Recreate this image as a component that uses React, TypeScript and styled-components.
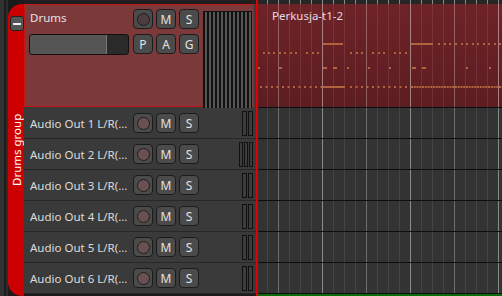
import React from 'react';
import styled, { createGlobalStyle } from 'styled-components';

const GlobalStyle = createGlobalStyle`
  html, body {
    margin: 0;
    padding: 0;
    background: #2a2a2a;
  }
  body {
    font-family: "Noto Sans", "DejaVu Sans", sans-serif;
  }
`;

const Window = styled.div`
  width: 502px;
  height: 296px;
  display: flex;
  overflow: hidden;
  background: #2a2a2a;
`;

const Gutter = styled.div`
  width: 8px;
  flex-shrink: 0;
  background: linear-gradient(90deg, #303030 0 4px, #1c1c1c 4px 6px, #2c2c2c 6px 8px);
`;

const GroupColumn = styled.div`
  width: 16px;
  flex-shrink: 0;
  display: flex;
  flex-direction: column;
  background: #1a1a1a;
  padding-top: 4px;
`;

const GroupBar = styled.div`
  flex: 1;
  background: #cc0000;
  border-radius: 14px 0 0 14px;
  display: flex;
  flex-direction: column;
  align-items: center;
  padding-top: 12px;
`;

const CollapseButton = styled.button`
  width: 14px;
  height: 15px;
  margin-left: 2px;
  padding: 0;
  border: 1px solid #222;
  border-radius: 3px;
  background: #555;
  display: flex;
  align-items: center;
  justify-content: center;
  &::before {
    content: '';
    width: 8px;
    height: 2px;
    background: #f0f0f0;
  }
`;

const GroupLabel = styled.div`
  flex: 1;
  display: flex;
  align-items: center;
  justify-content: center;
  writing-mode: vertical-rl;
  transform: rotate(180deg);
  color: #ffffff;
  font-size: 11.5px;
  margin-bottom: 28px;
`;

const HeaderColumn = styled.div`
  width: 232px;
  flex-shrink: 0;
  display: flex;
  flex-direction: column;
  background: #2a2a2a;
`;

const TopDark = styled.div`
  height: 4px;
  background: #1f1f1f;
  flex-shrink: 0;
`;

const GroupRow = styled.div`
  height: 104px;
  flex-shrink: 0;
  padding-right: 2px;
  padding-bottom: 1px;
  box-sizing: border-box;
  background: #3a3a3a;
`;

const GroupBox = styled.div`
  height: 100%;
  box-sizing: border-box;
  border: 1px solid #c41414;
  background: #7b393a;
  display: flex;
  padding: 4px 1px 0 4px;
  gap: 4px;
`;

const NameColumn = styled.div`
  width: 100px;
  display: flex;
  flex-direction: column;
  gap: 5px;
`;

const TrackName = styled.div`
  height: 20px;
  line-height: 18px;
  font-size: 11.5px;
  color: #e6e0ea;
  padding-left: 1px;
  white-space: nowrap;
  overflow: hidden;
`;

const Fader = styled.div<{ $level: number }>`
  height: 21px;
  box-sizing: border-box;
  border: 1px solid #111;
  border-radius: 3px;
  background: linear-gradient(
    90deg,
    #555 0 ${p => p.$level}%,
    #777 ${p => p.$level}% calc(${p => p.$level}% + 1px),
    #2a2a2a calc(${p => p.$level}% + 1px)
  );
`;

const ButtonGrid = styled.div`
  display: grid;
  grid-template-columns: repeat(3, 20px);
  grid-auto-rows: 20px;
  column-gap: 3px;
  row-gap: 5px;
  align-content: start;
`;

const ToolButton = styled.div`
  width: 20px;
  height: 20px;
  box-sizing: border-box;
  border: 1px solid #1c1c1c;
  border-radius: 4px;
  background: #4b4b4b;
  color: #e2e2e2;
  font-size: 12px;
  display: flex;
  align-items: center;
  justify-content: center;
`;

const RecDot = styled.span<{ $dim?: boolean }>`
  width: 13px;
  height: 13px;
  box-sizing: border-box;
  border-radius: 50%;
  border: 1px solid #1e1e1e;
  background: ${p => (p.$dim ? '#4e3d3e' : '#6b5052')};
`;

const GroupMeter = styled.div`
  width: 49px;
  height: 98px;
  margin-top: 2px;
  box-sizing: border-box;
  display: flex;
  gap: 2px;
  padding: 1px 1px 1px 2px;
  background: #111;
`;

const MeterBar = styled.div<{ $w: number; $fill: string }>`
  width: ${p => p.$w}px;
  height: 100%;
  background: ${p => p.$fill};
`;

const TrackRow = styled.div`
  height: 31px;
  flex-shrink: 0;
  box-sizing: border-box;
  border-bottom: 1px solid #282828;
  background: #3a3a3a;
  display: flex;
  align-items: center;
  padding: 0 3px 0 6px;
`;

const RowName = styled.div`
  width: 103px;
  font-size: 11.5px;
  color: #dcdcdc;
  white-space: nowrap;
  overflow: hidden;
`;

const RowButtons = styled.div`
  display: flex;
  gap: 3px;
`;

const RowMeter = styled.div`
  margin-left: auto;
  height: 25px;
  display: flex;
  gap: 1px;
`;

const RowMeterBar = styled.div<{ $w: number }>`
  width: ${p => p.$w}px;
  height: 100%;
  box-sizing: border-box;
  border: 1px solid #111;
  background: #3c3c3c;
`;

const BottomDark = styled.div`
  flex: 1;
  background: #1a1a1a;
`;

const Divider = styled.div`
  width: 2px;
  flex-shrink: 0;
  background: #e00000;
`;

const LaneColumn = styled.div`
  flex: 1;
  display: flex;
  flex-direction: column;
  background: #333;
`;

const Ruler = styled.div`
  height: 4px;
  flex-shrink: 0;
  background-color: #262626;
  background-image: repeating-linear-gradient(
    90deg,
    transparent 0 9px,
    #8a8a8a 9px 10px,
    transparent 10px 11px
  );
`;

const gridLines = `
  repeating-linear-gradient(90deg, transparent 0 64px, rgba(255,255,255,0.2) 64px 65px, transparent 65px 88px),
  repeating-linear-gradient(90deg, transparent 0 20px, rgba(255,255,255,0.22) 20px 21px, transparent 21px 44px),
  repeating-linear-gradient(90deg, transparent 0 9px, rgba(255,255,255,0.09) 9px 10px, transparent 10px 11px)
`;

const Lane = styled.div<{ $h: number; $clip?: boolean }>`
  height: ${p => p.$h}px;
  flex-shrink: 0;
  box-sizing: border-box;
  border-bottom: 1px solid #0e0e0e;
  display: flex;
  flex-direction: column;
  background-image: ${gridLines}${p =>
      p.$clip ? ', linear-gradient(180deg, #6e2327 0%, #5c1d21 100%)' : ''};
  background-color: #333;
`;

const ClipLabel = styled.div`
  height: 24px;
  box-sizing: border-box;
  padding: 4px 0 0 14px;
  line-height: 16px;
  font-size: 11.5px;
  color: #e0dbe6;
  white-space: nowrap;
`;

const Notes = styled.svg`
  display: block;
  width: 244px;
  height: 79px;
`;

const GreenStrip = styled.div`
  flex: 1;
  background: #0b6b0b;
`;

const NOTE = '#b0643e';
const X0 = 258;

type Seg = [number, number];

const rowA: Seg[] = [
  [323, 343],
  [411, 433],
  ...[438, 444, 449, 455, 461, 466, 472, 477, 483, 488, 494, 499].map(x => [x, x + 2] as Seg),
];

const rowB: Seg[] = [263, 268, 273, 279, 284, 290, 295, 306, 312, 317, 350, 356, 361, 372, 378, 383, 394, 399, 405].map(
  x => [x, x + 2] as Seg,
);

const rowC: Seg[] = [
  [258, 260],
  [279, 282],
  [323, 327],
  [333, 337],
  [347, 349],
  [368, 370],
  [389, 391],
  [412, 416],
  [422, 426],
  [466, 468],
  [489, 491],
];

const rowD: Seg[] = [];
for (let x = 260; x < 323; x += 5.5) rowD.push([x, x + 2]);
rowD.push([323, 345]);
for (let x = 350; x < 410; x += 5.5) rowD.push([x, x + 2]);
for (let x = 411; x < 502; x += 2.75) rowD.push([x, x + 2]);

const noteRows: { y: number; segs: Seg[] }[] = [
  { y: 15, segs: rowA },
  { y: 24, segs: rowB },
  { y: 39, segs: rowC },
  { y: 58, segs: rowD },
];

const tracks = [
  { name: 'Audio Out 1 L/R(...', bars: [5, 5] },
  { name: 'Audio Out 2 L/R(...', bars: [4, 4, 4] },
  { name: 'Audio Out 3 L/R(...', bars: [5, 5] },
  { name: 'Audio Out 4 L/R(...', bars: [5, 5] },
  { name: 'Audio Out 5 L/R(...', bars: [5, 5] },
  { name: 'Audio Out 6 L/R(...', bars: [5, 5] },
];

const App: React.FC = () => {
  return (
    <>
      <GlobalStyle />
      <Window>
        <Gutter />
        <GroupColumn>
          <GroupBar>
            <CollapseButton />
            <GroupLabel>Drums group</GroupLabel>
          </GroupBar>
        </GroupColumn>

        <HeaderColumn>
          <TopDark />
          <GroupRow>
            <GroupBox>
              <NameColumn>
                <TrackName>Drums</TrackName>
                <Fader $level={78} />
              </NameColumn>
              <ButtonGrid>
                <ToolButton><RecDot $dim /></ToolButton>
                <ToolButton>M</ToolButton>
                <ToolButton>S</ToolButton>
                <ToolButton>P</ToolButton>
                <ToolButton>A</ToolButton>
                <ToolButton>G</ToolButton>
              </ButtonGrid>
              <GroupMeter>
                {Array.from({ length: 12 }).map((_, i) => (
                  <MeterBar key={i} $w={2} $fill="#555" />
                ))}
              </GroupMeter>
            </GroupBox>
          </GroupRow>
          {tracks.map(t => (
            <TrackRow key={t.name}>
              <RowName>{t.name}</RowName>
              <RowButtons>
                <ToolButton><RecDot /></ToolButton>
                <ToolButton>M</ToolButton>
                <ToolButton>S</ToolButton>
              </RowButtons>
              <RowMeter>
                {t.bars.map((w, i) => (
                  <RowMeterBar key={i} $w={w} />
                ))}
              </RowMeter>
            </TrackRow>
          ))}
          <BottomDark />
        </HeaderColumn>

        <Divider />

        <LaneColumn>
          <Ruler />
          <Lane $h={104} $clip>
            <ClipLabel>Perkusja-t1-2</ClipLabel>
            <Notes viewBox="0 0 244 79">
              {noteRows.map(r =>
                r.segs.map(([a, b], i) => (
                  <rect key={`${r.y}-${i}`} x={a - X0} y={r.y} width={b - a} height={2} fill={NOTE} />
                )),
              )}
            </Notes>
          </Lane>
          {tracks.map(t => (
            <Lane key={t.name} $h={31} />
          ))}
          <GreenStrip />
        </LaneColumn>
      </Window>
    </>
  );
};

export default App;
